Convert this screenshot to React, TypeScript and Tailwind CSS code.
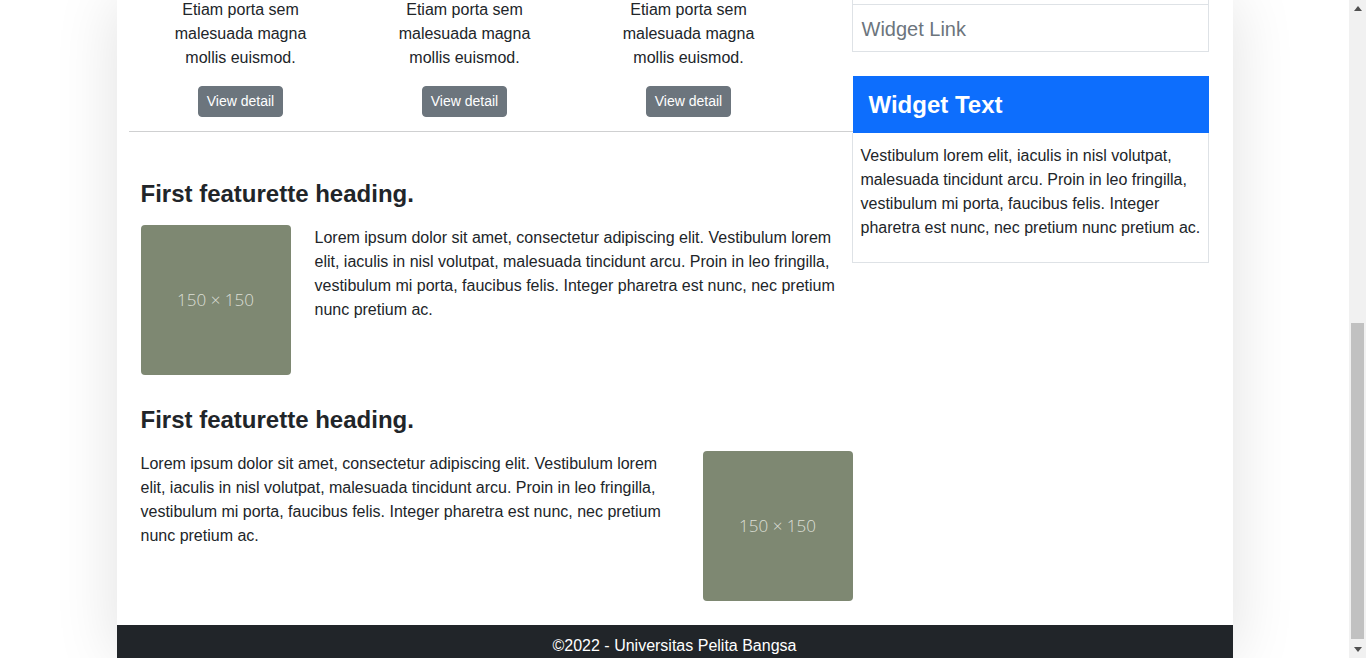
import React from "react";

const cards = [1, 2, 3];

function Placeholder() {
  return (
    <div className="w-[150px] h-[150px] shrink-0 rounded bg-[#7e8872] flex items-center justify-center">
      <span className="font-['Open_Sans',sans-serif] font-light text-[17px] text-[#dcdfd6]">150 × 150</span>
    </div>
  );
}

export default function App() {
  return (
    <div className="h-[658px] overflow-hidden flex bg-white text-[#212529] font-['Liberation_Sans',Arial,sans-serif] text-base">
      <div className="flex-1 overflow-hidden">
        <div className="mx-auto w-[1116px] h-[658px] bg-white shadow-[0_0_60px_rgba(0,0,0,0.12)] flex flex-col">
          <div className="flex-1 flex pl-3 overflow-hidden">
            {/* LEFT */}
            <div className="w-[724px]">
              <div className="grid grid-cols-3 w-[672px] -mt-[2px]">
                {cards.map((c) => (
                  <div key={c} className="flex flex-col items-center">
                    <p className="w-[160px] text-center leading-6 mb-4">Etiam porta sem malesuada magna mollis euismod.</p>
                    <button className="bg-[#6c757d] text-white text-sm leading-[21px] px-2 py-1 border border-[#6c757d] rounded">
                      View detail
                    </button>
                  </div>
                ))}
              </div>

              <hr className="mt-[14px] border-t border-[#cfd0d1]" />

              <div className="pl-3">
                <h2 className="mt-[48px] mb-4 text-2xl font-bold leading-[1.2]">First featurette heading.</h2>
                <div className="flex gap-6">
                  <Placeholder />
                  <p className="flex-1 pt-px leading-6">
                    Lorem ipsum dolor sit amet, consectetur adipiscing elit. Vestibulum lorem elit, iaculis in nisl volutpat, malesuada tincidunt arcu. Proin in leo fringilla, vestibulum mi porta, faucibus felis. Integer pharetra est nunc, nec pretium nunc pretium ac.
                  </p>
                </div>

                <h2 className="mt-[31px] mb-4 text-2xl font-bold leading-[1.2]">First featurette heading.</h2>
                <div className="flex gap-6">
                  <p className="flex-1 pt-px leading-6">
                    Lorem ipsum dolor sit amet, consectetur adipiscing elit. Vestibulum lorem elit, iaculis in nisl volutpat, malesuada tincidunt arcu. Proin in leo fringilla, vestibulum mi porta, faucibus felis. Integer pharetra est nunc, nec pretium nunc pretium ac.
                  </p>
                  <Placeholder />
                </div>
              </div>
            </div>

            {/* RIGHT */}
            <div className="w-[357px] -ml-px">
              <div className="-mt-[42px] border border-[#dee2e6]">
                <div className="h-[46px] border-b border-[#dee2e6]" />
                <div className="h-[46px] px-[9px] pt-[2px] flex items-center text-xl text-[#6c757d]">Widget Link</div>
              </div>

              <div className="mt-6 ml-px h-[57px] bg-[#0d6efd] pl-4 pr-4 flex items-center text-white text-2xl font-bold">Widget Text</div>
              <div className="border border-t-0 border-[#dee2e6] pl-2 pr-1 pt-[11px] pb-[22px]">
                <p className="leading-6">
                  Vestibulum lorem elit, iaculis in nisl volutpat, malesuada tincidunt arcu. Proin in leo fringilla, vestibulum mi porta, faucibus felis. Integer pharetra est nunc, nec pretium nunc pretium ac.
                </p>
              </div>
            </div>
          </div>

          {/* FOOTER */}
          <footer className="h-[33px] shrink-0 bg-[#212529] text-white text-center pt-[9px] leading-6">
            ©2022 - Universitas Pelita Bangsa
          </footer>
        </div>
      </div>

      {/* scrollbar */}
      <div className="w-[17px] bg-[#f1f1f1] flex flex-col items-center">
        <div className="h-[17px] flex items-center justify-center">
          <svg width="8" height="5" viewBox="0 0 8 5"><path d="M4 0L8 5H0z" fill="#505050" /></svg>
        </div>
        <div className="flex-1 w-full flex flex-col px-[2px]">
          <div className="h-[306px]" />
          <div className="h-[316px] bg-[#c1c1c1]" />
        </div>
        <div className="h-[17px] flex items-center justify-center">
          <svg width="8" height="5" viewBox="0 0 8 5"><path d="M0 0H8L4 5z" fill="#505050" /></svg>
        </div>
      </div>
    </div>
  );
}
